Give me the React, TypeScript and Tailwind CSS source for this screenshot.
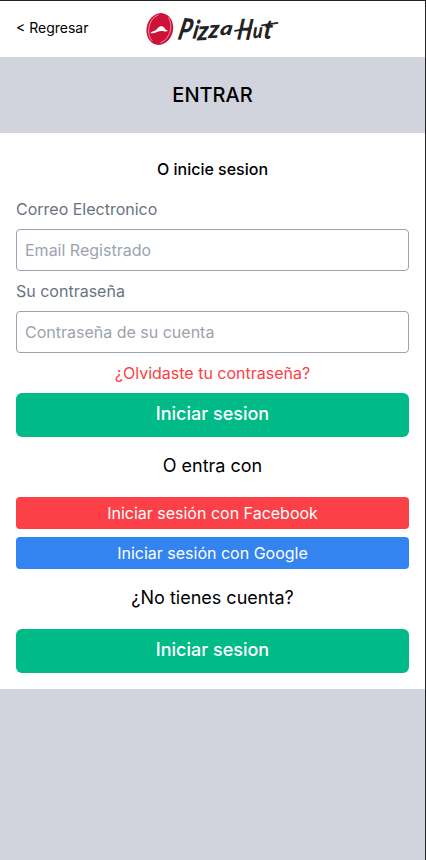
const letters: { char: string; x: number; y: number; size: number; sx: number; skew: number; rotate: number }[] = [
  { char: "P", x: 31, y: 28.6, size: 30, sx: 0.72, skew: -10, rotate: 3 },
  { char: "i", x: 46, y: 27.4, size: 26, sx: 0.8, skew: -8, rotate: 3 },
  { char: "z", x: 51, y: 29.4, size: 27, sx: 0.92, skew: -8, rotate: -3 },
  { char: "z", x: 62, y: 27.2, size: 25, sx: 0.98, skew: -8, rotate: -3 },
  { char: "a", x: 73.5, y: 23.6, size: 19, sx: 1.25, skew: -8, rotate: 0 },
  { char: "H", x: 90.5, y: 28.4, size: 29, sx: 0.7, skew: -6, rotate: 2 },
  { char: "u", x: 106.5, y: 26.8, size: 21, sx: 0.85, skew: -4, rotate: 0 },
  { char: "t", x: 117, y: 27.6, size: 27, sx: 0.85, skew: -4, rotate: 3 },
];

function Logo() {
  return (
    <svg className="h-9 w-[134px] shrink-0 overflow-visible" viewBox="0 0 134 36" role="img" aria-label="Pizza Hut">
      <g transform="rotate(14 13.8 18)">
        <ellipse cx="13.8" cy="18" rx="13.2" ry="16" fill="#cd1138" />
        <path d="M9 4.8C4 8 2.4 14 3 20c.5 5 3 9.5 6.5 11.5" fill="none" stroke="#fff" strokeWidth="0.7" opacity="0.7" />
        <path d="M19 4.5c4.5 4 6 10 5 16.5-.8 4.8-3.3 8.5-6.2 10" fill="none" stroke="#fff" strokeWidth="0.7" opacity="0.7" />
      </g>
      <path
        d="M4.6 21.8c1-1 3-1.9 5.2-2.6 1.2-1 2.4-2.9 4-3.7 1.3-.5 3.5.2 4.4 1 .6.6.6 1.5 1.3 2 1 .5 1.8.6 2 1.3-.3.8-2 .8-3.6.5-2.7-.4-4.9-.2-7 .7-2 .9-5.3 2-6.3.8z"
        fill="#fff"
      />
      <g
        fill="#242323"
        fontFamily="Lato, 'Liberation Sans', sans-serif"
        fontWeight="900"
        fontStyle="italic"
      >
        {letters.map((l, i) => (
          <text
            key={i}
            fontSize={l.size}
            transform={`translate(${l.x} ${l.y}) rotate(${l.rotate}) skewX(${l.skew}) scale(${l.sx} 1)`}
          >
            {l.char}
          </text>
        ))}
      </g>
      <path d="M89 19.8L105 16.8M116 14.4L131.5 11.8" stroke="#242323" strokeWidth="1.8" strokeLinecap="round" />
    </svg>
  );
}

function Field({ label, placeholder, type }: { label: string; placeholder: string; type: string }) {
  return (
    <label className="flex flex-col gap-2 text-gray-500">
      {label}
      <input
        type={type}
        placeholder={placeholder}
        className="h-[42px] w-full rounded border border-[#9aa3b2] bg-white p-2 text-black placeholder:text-[#9ca3af]"
      />
    </label>
  );
}

const primary = "rounded-md bg-[#00ba88] pt-[7px] pb-[9px] text-lg font-medium text-white";
const heading = "pt-[7px] pb-[9px] text-center text-lg";

export default function App() {
  return (
    <div className="min-h-screen border-t border-r border-[#242424] bg-[#d1d4dc] font-['Inter',sans-serif] text-black">
      <header className="grid h-14 grid-cols-3 items-center bg-white px-4">
        <a href="#" className="pb-0.5 text-sm">&lt; Regresar</a>
        <div className="flex justify-center">
          <Logo />
        </div>
      </header>
      <h1 className="py-6 text-center text-xl font-medium">ENTRAR</h1>
      <main className="flex flex-col gap-2 bg-white p-4">
        <h2 className="py-2 text-center font-medium">O inicie sesion</h2>
        <Field label="Correo Electronico" placeholder="Email Registrado" type="email" />
        <Field label="Su contraseña" placeholder="Contraseña de su cuenta" type="password" />
        <a href="#" className="text-center text-[#fb4147]">¿Olvidaste tu contraseña?</a>
        <button className={primary}>Iniciar sesion</button>
        <p className={heading}>O entra con</p>
        <button className="rounded bg-[#fb4147] py-1 text-white">Iniciar sesión con Facebook</button>
        <button className="rounded bg-[#3384f1] py-1 text-white">Iniciar sesión con Google</button>
        <p className={heading}>¿No tienes cuenta?</p>
        <button className={primary}>Iniciar sesion</button>
      </main>
    </div>
  );
}
